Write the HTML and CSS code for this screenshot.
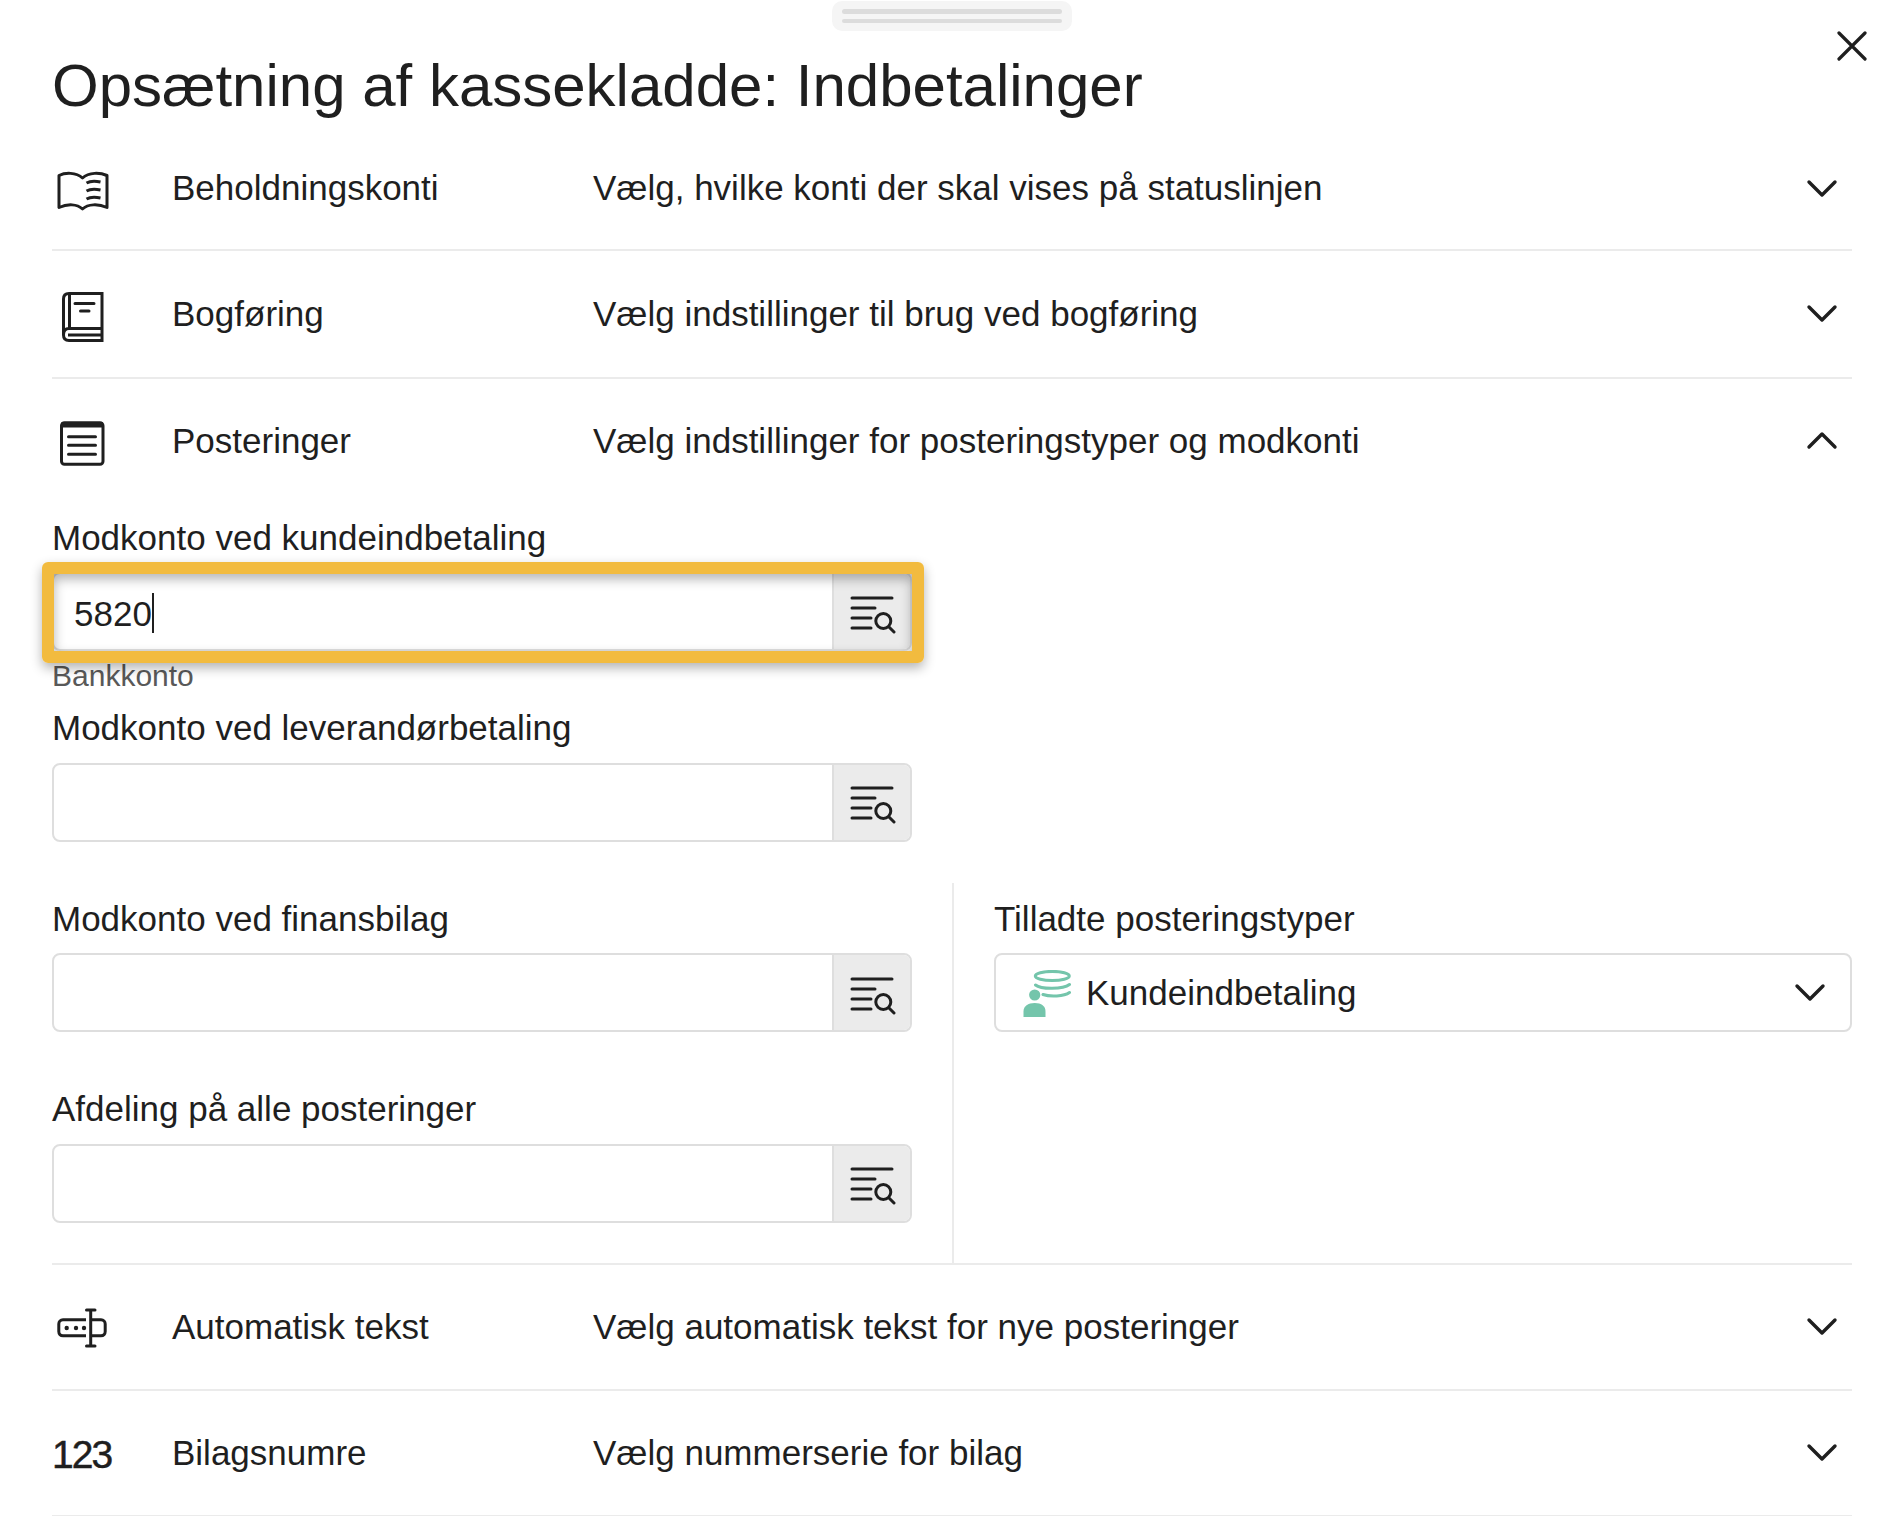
FILE: index.html
```html
<!DOCTYPE html>
<html lang="da">
<head>
	<meta charset="utf-8">
	<title>Opsætning af kassekladde</title>
	<link rel="stylesheet" href="styles.css">
</head>
<body>
	<svg class="defs" width="0" height="0">
		<symbol id="chevron" viewBox="0 0 32 20">
			<path d="M3 3L16 16L29 3" fill="none" stroke="#1f1f1f" stroke-width="3.4" stroke-linecap="round" stroke-linejoin="round"/>
		</symbol>
		<symbol id="lookup" viewBox="0 0 48 44">
			<g fill="none" stroke="#1f1f1f" stroke-width="3" stroke-linecap="round">
				<path d="M4 8H44M4 18H27M4 28H23M4 38H23"/>
				<circle cx="35.3" cy="31" r="7.5"/>
				<path d="M41 37L46 42"/>
			</g>
		</symbol>
	</svg>

	<div class="handle"><span></span><span></span></div>
	<svg class="close" width="30" height="30" viewBox="0 0 30 30">
		<path d="M2 2L28 28M28 2L2 28" fill="none" stroke="#1f1f1f" stroke-width="3.2" stroke-linecap="round"/>
	</svg>

	<main class="sheet">
		<h1>Opsætning af kassekladde: Indbetalinger</h1>

		<div class="row row-first">
			<svg class="row-icon" viewBox="2 -3 60 60">
				<g fill="none" stroke="#1f1f1f" stroke-width="3" stroke-linejoin="round">
					<path d="M9 14.5C15 11.5 26 11 32.5 17C39 11 50 11.5 57 14.5V46.5C48 42.5 38 43 32.5 48C27 43 18 42.5 9 46.5Z"/>
					<path d="M36.5 22C40 20 46 20 50.5 21M36.5 30C40 28 46 28 50.5 29M36.5 38C40 36 46 36 50.5 37"/>
				</g>
			</svg>
			<div class="row-title">Beholdningskonti</div>
			<div class="row-desc">Vælg, hvilke konti der skal vises på statuslinjen</div>
			<svg class="chevron"><use href="#chevron"/></svg>
		</div>

		<div class="row row-tall">
			<svg class="row-icon" viewBox="2 -1 60 60">
				<g fill="none" stroke="#1f1f1f" stroke-width="3">
					<path d="M52 8.5H19C15.5 8.5 13.5 10.5 13.5 14V50C13.5 53.5 15.5 55.5 19 55.5H52Z"/>
					<path d="M19.5 8.5V43.5M13.5 50C13.5 46 15 43.5 19 43.5H52M18 50H52"/>
					<path d="M25 18.5H44M30.5 26H39" stroke-linecap="round"/>
				</g>
			</svg>
			<div class="row-title">Bogføring</div>
			<div class="row-desc">Vælg indstillinger til brug ved bogføring</div>
			<svg class="chevron"><use href="#chevron"/></svg>
		</div>

		<section class="open">
			<div class="row row-open">
				<svg class="row-icon" viewBox="2 -2 60 60">
					<rect x="11.5" y="9.8" width="41.5" height="41.5" rx="3" fill="none" stroke="#1f1f1f" stroke-width="3"/>
					<rect x="11.5" y="9" width="41.5" height="5.5" fill="#1f1f1f"/>
					<path d="M18.5 23.7H45.5M18.5 32.3H45.5M18.5 41.3H45.5" fill="none" stroke="#1f1f1f" stroke-width="3" stroke-linecap="round"/>
				</svg>
				<div class="row-title">Posteringer</div>
				<div class="row-desc">Vælg indstillinger for posteringstyper og modkonti</div>
				<svg class="chevron flipped"><use href="#chevron"/></svg>
			</div>

			<div class="field">
				<label>Modkonto ved kundeindbetaling</label>
				<div class="lookup highlighted">
					<div class="lookup-value">5820<span class="caret"></span></div>
					<div class="lookup-btn"><svg><use href="#lookup"/></svg></div>
				</div>
				<div class="help">Bankkonto</div>
			</div>
			<div class="field">
				<label>Modkonto ved leverandørbetaling</label>
				<div class="lookup">
					<div class="lookup-value"></div>
					<div class="lookup-btn"><svg><use href="#lookup"/></svg></div>
				</div>
			</div>

			<div class="columns">
				<div class="col-left">
					<div class="field">
						<label>Modkonto ved finansbilag</label>
						<div class="lookup">
							<div class="lookup-value"></div>
							<div class="lookup-btn"><svg><use href="#lookup"/></svg></div>
						</div>
					</div>
					<div class="field field-end">
						<label>Afdeling på alle posteringer</label>
						<div class="lookup">
							<div class="lookup-value"></div>
							<div class="lookup-btn"><svg><use href="#lookup"/></svg></div>
						</div>
					</div>
				</div>
				<div class="col-right">
					<div class="field">
						<label>Tilladte posteringstyper</label>
						<div class="select">
							<svg class="select-icon" viewBox="0 0 48 47">
								<g fill="none" stroke="#74c5ab" stroke-width="3" stroke-linecap="round">
									<ellipse cx="29.3" cy="6" rx="17" ry="4.6"/>
									<path d="M12.5 15C18 19.5 40 19.5 46.5 14.5M20 24.5C27 27 41 26.5 46.5 22.5"/>
								</g>
								<circle cx="11.7" cy="25" r="5.6" fill="#74c5ab"/>
								<path d="M0.5 47V41.5C0.5 36 5 33 11.7 33C18.5 33 22.5 36 22.5 41.5V47Z" fill="#74c5ab"/>
							</svg>
							<span class="select-text">Kundeindbetaling</span>
							<svg class="chevron"><use href="#chevron"/></svg>
						</div>
					</div>
				</div>
			</div>
		</section>

		<div class="row">
			<svg class="row-icon" viewBox="2 -2 60 60">
				<g fill="none" stroke="#1f1f1f" stroke-width="3">
					<path d="M36 20.8H13C10.5 20.8 8.8 22.5 8.8 25V32.5C8.8 35 10.5 36.8 13 36.8H36"/>
					<path d="M41 20.8H51C53.5 20.8 55.2 22.5 55.2 25V32.5C55.2 35 53.5 36.8 51 36.8H41"/>
					<path d="M40.7 11V47M36.5 11H45M36.5 47H45" stroke-linecap="round"/>
				</g>
				<circle cx="16.7" cy="29" r="2.2" fill="#1f1f1f"/>
				<circle cx="26" cy="29" r="2.2" fill="#1f1f1f"/>
				<circle cx="34" cy="29" r="2.2" fill="#1f1f1f"/>
			</svg>
			<div class="row-title">Automatisk tekst</div>
			<div class="row-desc">Vælg automatisk tekst for nye posteringer</div>
			<svg class="chevron"><use href="#chevron"/></svg>
		</div>

		<div class="row">
			<div class="row-number">123</div>
			<div class="row-title">Bilagsnumre</div>
			<div class="row-desc">Vælg nummerserie for bilag</div>
			<svg class="chevron"><use href="#chevron"/></svg>
		</div>
	</main>
</body>
</html>
```

FILE: styles.css
```css
html, body {
	margin: 0;
	height: 1516px;
	overflow: hidden;
	background: #fff;
}
body {
	font-family: "Liberation Sans", Arial, sans-serif;
	font-size: 35px;
	color: #1f1f1f;
}
.defs {
	position: absolute;
}
.handle {
	position: absolute;
	left: 832px;
	top: 1px;
	width: 240px;
	height: 30px;
	box-sizing: border-box;
	padding: 8px 10px;
	background: #f5f5f5;
	border-radius: 10px;
	display: flex;
	flex-direction: column;
	gap: 5px;
}
.handle span {
	height: 5px;
	background: #dcdcdc;
	border-radius: 3px;
}
.close {
	position: absolute;
	left: 1837px;
	top: 31px;
}
.sheet {
	padding: 0 46px 0 52px;
}
h1 {
	margin: 0;
	height: 124.7px;
	padding-top: 56px;
	box-sizing: border-box;
	font-size: 60px;
	line-height: 60px;
	font-weight: 400;
}

.row {
	display: flex;
	align-items: center;
	height: 125.8px;
	box-sizing: border-box;
	border-bottom: 2px solid #ebebeb;
}
.row-first {
	height: 126.6px;
	padding-top: 2px;
}
.row-tall {
	height: 127.4px;
}
.row-open {
	height: 123.9px;
	border-bottom: none;
}
.row-icon {
	width: 60px;
	height: 60px;
	margin-right: 60px;
	flex: none;
}
.row-number {
	width: 120px;
	flex: none;
	font-size: 39px;
	letter-spacing: -2px;
	padding-top: 4px;
	-webkit-text-stroke: 0.5px #1f1f1f;
}
.row-title {
	width: 421px;
	flex: none;
}
.row-desc {
	flex: 1;
}
.chevron {
	width: 32px;
	height: 20px;
	margin-right: 14px;
	flex: none;
}
.row-first .chevron {
	margin-top: 2px;
}
.flipped {
	transform: rotate(180deg);
	margin-top: -2px;
}

.open {
	border-bottom: 2px solid #ebebeb;
}
.field {
	height: 190.4px;
	box-sizing: border-box;
	padding-top: 15.4px;
}
.field-end {
	height: 189.4px;
}
label {
	display: block;
	height: 40px;
	line-height: 40px;
	margin-bottom: 14.5px;
}
.lookup {
	position: relative;
	display: flex;
	width: 860px;
	height: 79px;
	box-sizing: border-box;
	border: 2px solid #dedede;
	border-radius: 8px;
}
.lookup-value {
	flex: 1;
	display: flex;
	align-items: center;
	padding: 4px 0 0 20px;
}
.caret {
	width: 2px;
	height: 40px;
	margin-top: -2px;
	background: #1f1f1f;
}
.lookup-btn {
	width: 78px;
	flex: none;
	box-sizing: border-box;
	border-left: 2px solid #dedede;
	border-radius: 0 6px 6px 0;
	background: #ebebeb;
	display: flex;
	align-items: center;
	justify-content: center;
}
.lookup-btn svg {
	width: 48px;
	height: 44px;
}
.highlighted::after {
	content: "";
	position: absolute;
	left: -12px;
	top: -12px;
	right: -14px;
	bottom: -14px;
	border: 12px solid #f2bb3f;
	border-radius: 6px;
	box-shadow: 0 5px 12px rgba(0, 0, 0, 0.3), inset 0 5px 12px rgba(0, 0, 0, 0.3);
}
.help {
	height: 30px;
	line-height: 30px;
	margin-top: 9.5px;
	font-size: 30px;
	color: #595959;
}

.columns {
	display: flex;
}
.col-left {
	width: 902px;
	flex: none;
	box-sizing: border-box;
	border-right: 2px solid #ebebeb;
}
.col-right {
	flex: 1;
	padding-left: 40px;
}
.select {
	display: flex;
	align-items: center;
	height: 79px;
	box-sizing: border-box;
	border: 2px solid #dedede;
	border-radius: 8px;
	padding-left: 27px;
}
.select-icon {
	width: 48px;
	height: 47px;
	margin: 2px 15px 0 0;
}
.select-text {
	flex: 1;
}
.select .chevron {
	margin: 1px 24px 0 0;
}
```
